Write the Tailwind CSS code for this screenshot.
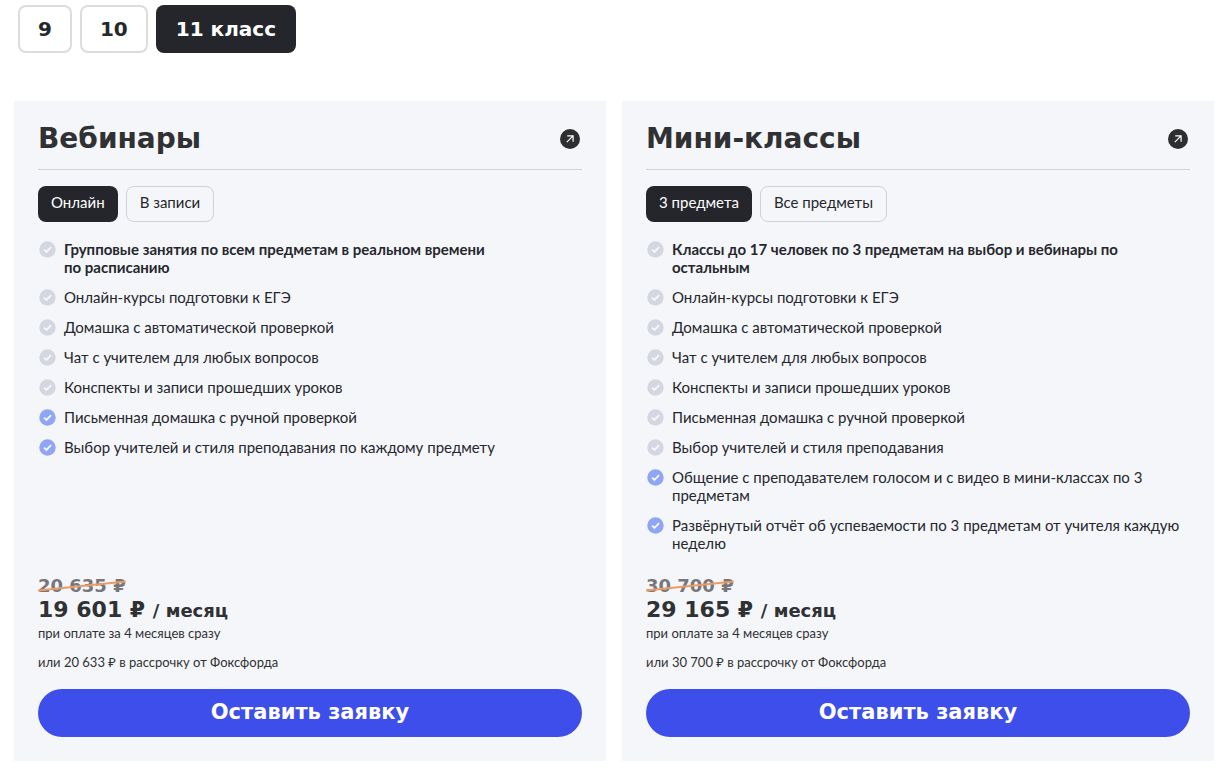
<!DOCTYPE html>
<html lang="ru">
<head>
  <meta charset="UTF-8">
  <meta name="viewport" content="width=device-width, initial-scale=1.0">
  <title>11 класс: тарифы</title>
  <script src="https://cdn.jsdelivr.net/npm/@tailwindcss/browser@4"></script>
</head>
<body class="bg-white text-[#25272d] font-['Lato','Noto_Sans',sans-serif]">
  <!-- Shared icons -->
  <svg class="hidden">
    <symbol id="check" viewBox="0 0 17 18">
      <circle cx="8.5" cy="9.5" r="8.2" fill="currentColor"/>
      <path d="M5 9.6l2.5 2.4 4.6-4.8" fill="none" stroke="#f5f6fa" stroke-width="1.9"/>
    </symbol>
    <symbol id="arrow" viewBox="0 0 20 20">
      <circle cx="10" cy="10" r="10" fill="#2d2e30"/>
      <path d="M6.8 13.2l6-6M7.2 6.9h5.9v5.9" fill="none" stroke="#fff" stroke-width="1.2"/>
    </symbol>
  </svg>

  <main class="px-[14px] pt-[5px] pb-[10px]">
    <!-- Grade switch -->
    <div class="flex gap-2 pl-1 mb-12 font-['DejaVu_Sans',sans-serif] font-bold text-[20px]">
      <button class="h-12 px-[18px] rounded-lg border-2 border-[#dcdcde]">9</button>
      <button class="h-12 px-[18px] rounded-lg border-2 border-[#dcdcde]">10</button>
      <button class="h-12 px-5 rounded-lg bg-[#25262c] text-white">11 класс</button>
    </div>

    <div class="grid grid-cols-2 gap-4">
      <section class="flex flex-col p-6 bg-[#f5f6fa]">
        <div class="flex items-center justify-between pb-4 border-b border-[#d0d2d8]">
          <h2 class="font-['DejaVu_Sans',sans-serif] font-bold text-[28px] leading-7 text-[#2f3133]">Вебинары</h2>
          <a href="#" aria-label="Подробнее" class="mr-[2px]"><svg class="size-5"><use href="#arrow"/></svg></a>
        </div>
        <div class="flex gap-2 mt-4 text-[15px]">
          <button class="h-9 px-[13px] pb-[3px] rounded-lg bg-[#25262c] text-white">Онлайн</button>
          <button class="h-9 px-[13px] pb-[3px] rounded-lg border border-[#cfd1d8]">В записи</button>
        </div>
        <ul class="flex flex-col gap-3 mt-[18px] text-[15px] leading-[18px]">
          <li class="flex gap-2 pl-[1px] font-bold"><svg class="w-[17px] h-[18px] shrink-0 text-[#d5d7e0]"><use href="#check"/></svg><span>Групповые занятия по всем предметам в реальном времени<br>по расписанию</span></li>
          <li class="flex gap-2 pl-[1px]"><svg class="w-[17px] h-[18px] shrink-0 text-[#d5d7e0]"><use href="#check"/></svg><span>Онлайн-курсы подготовки к ЕГЭ</span></li>
          <li class="flex gap-2 pl-[1px]"><svg class="w-[17px] h-[18px] shrink-0 text-[#d5d7e0]"><use href="#check"/></svg><span>Домашка с автоматической проверкой</span></li>
          <li class="flex gap-2 pl-[1px]"><svg class="w-[17px] h-[18px] shrink-0 text-[#d5d7e0]"><use href="#check"/></svg><span>Чат с учителем для любых вопросов</span></li>
          <li class="flex gap-2 pl-[1px]"><svg class="w-[17px] h-[18px] shrink-0 text-[#d5d7e0]"><use href="#check"/></svg><span>Конспекты и записи прошедших уроков</span></li>
          <li class="flex gap-2 pl-[1px]"><svg class="w-[17px] h-[18px] shrink-0 text-[#8fa6f6]"><use href="#check"/></svg><span>Письменная домашка с ручной проверкой</span></li>
          <li class="flex gap-2 pl-[1px]"><svg class="w-[17px] h-[18px] shrink-0 text-[#8fa6f6]"><use href="#check"/></svg><span>Выбор учителей и стиля преподавания по каждому предмету</span></li>
        </ul>
        <div class="mt-auto pt-6 text-[13px] leading-4 text-[#2f3133]">
          <div class="font-['DejaVu_Sans',sans-serif] font-bold">
            <span class="relative inline-block align-top text-[18px] leading-5 text-[#75777b]">20 635 ₽
              <svg class="absolute inset-0 size-full" viewBox="0 0 90 20" preserveAspectRatio="none"><path d="M0 14.5L90 5.5" stroke="#ee9a62" stroke-width="2"/></svg>
            </span>
            <p class="text-[22px] leading-7">19 601 ₽ <span class="text-[18px]">/ месяц</span></p>
          </div>
          <p>при оплате за 4 месяцев сразу</p>
          <p class="mt-[13px]">или 20 633 ₽ в рассрочку от Фоксфорда</p>
        </div>
        <button class="mt-[19px] h-12 rounded-full bg-[#3d4eea] text-white font-['DejaVu_Sans',sans-serif] font-bold text-[21px]">Оставить заявку</button>
      </section>

      <section class="flex flex-col p-6 bg-[#f5f6fa]">
        <div class="flex items-center justify-between pb-4 border-b border-[#d0d2d8]">
          <h2 class="font-['DejaVu_Sans',sans-serif] font-bold text-[28px] leading-7 text-[#2f3133]">Мини-классы</h2>
          <a href="#" aria-label="Подробнее" class="mr-[2px]"><svg class="size-5"><use href="#arrow"/></svg></a>
        </div>
        <div class="flex gap-2 mt-4 text-[15px]">
          <button class="h-9 px-[13px] pb-[3px] rounded-lg bg-[#25262c] text-white">3 предмета</button>
          <button class="h-9 px-[13px] pb-[3px] rounded-lg border border-[#cfd1d8]">Все предметы</button>
        </div>
        <ul class="flex flex-col gap-3 mt-[18px] text-[15px] leading-[18px]">
          <li class="flex gap-2 pl-[1px] font-bold"><svg class="w-[17px] h-[18px] shrink-0 text-[#d5d7e0]"><use href="#check"/></svg><span>Классы до 17 человек по 3 предметам на выбор и вебинары по<br>остальным</span></li>
          <li class="flex gap-2 pl-[1px]"><svg class="w-[17px] h-[18px] shrink-0 text-[#d5d7e0]"><use href="#check"/></svg><span>Онлайн-курсы подготовки к ЕГЭ</span></li>
          <li class="flex gap-2 pl-[1px]"><svg class="w-[17px] h-[18px] shrink-0 text-[#d5d7e0]"><use href="#check"/></svg><span>Домашка с автоматической проверкой</span></li>
          <li class="flex gap-2 pl-[1px]"><svg class="w-[17px] h-[18px] shrink-0 text-[#d5d7e0]"><use href="#check"/></svg><span>Чат с учителем для любых вопросов</span></li>
          <li class="flex gap-2 pl-[1px]"><svg class="w-[17px] h-[18px] shrink-0 text-[#d5d7e0]"><use href="#check"/></svg><span>Конспекты и записи прошедших уроков</span></li>
          <li class="flex gap-2 pl-[1px]"><svg class="w-[17px] h-[18px] shrink-0 text-[#d5d7e0]"><use href="#check"/></svg><span>Письменная домашка с ручной проверкой</span></li>
          <li class="flex gap-2 pl-[1px]"><svg class="w-[17px] h-[18px] shrink-0 text-[#d5d7e0]"><use href="#check"/></svg><span>Выбор учителей и стиля преподавания</span></li>
          <li class="flex gap-2 pl-[1px]"><svg class="w-[17px] h-[18px] shrink-0 text-[#8fa6f6]"><use href="#check"/></svg><span>Общение с преподавателем голосом и с видео в мини-классах по 3<br>предметам</span></li>
          <li class="flex gap-2 pl-[1px]"><svg class="w-[17px] h-[18px] shrink-0 text-[#8fa6f6]"><use href="#check"/></svg><span>Развёрнутый отчёт об успеваемости по 3 предметам от учителя каждую<br>неделю</span></li>
        </ul>
        <div class="mt-auto pt-6 text-[13px] leading-4 text-[#2f3133]">
          <div class="font-['DejaVu_Sans',sans-serif] font-bold">
            <span class="relative inline-block align-top text-[18px] leading-5 text-[#75777b]">30 700 ₽
              <svg class="absolute inset-0 size-full" viewBox="0 0 90 20" preserveAspectRatio="none"><path d="M0 14.5L90 5.5" stroke="#ee9a62" stroke-width="2"/></svg>
            </span>
            <p class="text-[22px] leading-7">29 165 ₽ <span class="text-[18px]">/ месяц</span></p>
          </div>
          <p>при оплате за 4 месяцев сразу</p>
          <p class="mt-[13px]">или 30 700 ₽ в рассрочку от Фоксфорда</p>
        </div>
        <button class="mt-[19px] h-12 rounded-full bg-[#3d4eea] text-white font-['DejaVu_Sans',sans-serif] font-bold text-[21px]">Оставить заявку</button>
      </section>
    </div>
  </main>
</body>
</html>
